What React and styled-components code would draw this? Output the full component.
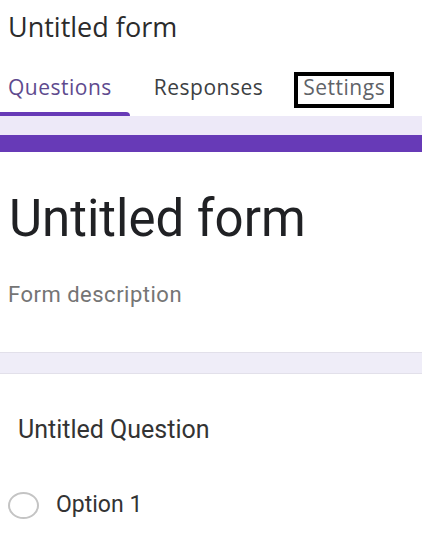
import React from 'react';
import styled, { createGlobalStyle } from 'styled-components';

const GlobalStyle = createGlobalStyle`
  body {
    margin: 0;
    background: #fff;
    font-family: Roboto, "Liberation Sans", sans-serif;
  }
`;

const tabs = [
    { label: 'Questions', active: true },
    { label: 'Responses' },
    { label: 'Settings', boxed: true },
];

const App = () => {
    return (
        <>
            <GlobalStyle />
            <Page>
                <Header>
                    <DocTitle>Untitled form</DocTitle>
                    <TabBar>
                        {tabs.map(t => (
                            <Tab key={t.label} active={t.active}>
                                <TabLabel boxed={t.boxed}>{t.label}</TabLabel>
                            </Tab>
                        ))}
                    </TabBar>
                </Header>
                <Band />
                <AccentBar />
                <TitleCard>
                    <FormTitle>Untitled form</FormTitle>
                    <FormDescription>Form description</FormDescription>
                </TitleCard>
                <Divider />
                <QuestionCard>
                    <QuestionTitle>Untitled Question</QuestionTitle>
                    <OptionRow>
                        <Radio />
                        <OptionLabel>Option 1</OptionLabel>
                    </OptionRow>
                </QuestionCard>
            </Page>
        </>
    )
}

export default App;

const Page = styled.div`
  width: 422px;
  display: flex;
  flex-direction: column;
`;

const Header = styled.header`
  display: flex;
  flex-direction: column;
`;

const DocTitle = styled.h1`
  margin: 0;
  padding: 11px 0 0 8px;
  font-family: "Open Sans", sans-serif;
  font-weight: 400;
  font-size: 27px;
  line-height: 32px;
  color: #2b2b2b;
`;

const TabBar = styled.nav`
  display: flex;
  margin-top: 29px;
`;

const Tab = styled.div`
  position: relative;
  display: flex;
  padding: 0 0 8px 0;
  margin-left: 40px;
  color: #3c4043;

  &:nth-child(2) {
    margin-left: 24px;
  }

  ${props => props.active && `
    margin-left: 0;
    padding: 0 18px 8px 8px;
    color: #5e4a8e;

    &::after {
      content: '';
      position: absolute;
      left: 0;
      right: 0;
      bottom: 0;
      height: 4px;
      background: #673ab7;
      border-radius: 0 4px 0 0;
    }
  `}
`;

const TabLabel = styled.span`
  font-family: "Open Sans", sans-serif;
  font-size: 21px;
  font-weight: 400;
  letter-spacing: 0.5px;
  line-height: 22px;
  padding: 0 5px 6px;
  margin: 0 -9px;
  border: 4px solid ${props => props.boxed ? '#000' : 'transparent'};
  color: inherit;

  ${props => props.boxed && `
    color: #5f6368;
  `}
`;

const Band = styled.div`
  height: 19px;
  background: #ede9f8;
`;

const AccentBar = styled.div`
  height: 17px;
  background: #673ab7;
`;

const TitleCard = styled.section`
  display: flex;
  flex-direction: column;
  padding: 37px 0 44px 9px;
`;

const FormTitle = styled.h2`
  margin: 0;
  font-weight: 400;
  font-size: 51px;
  line-height: 60px;
  color: #202124;
`;

const FormDescription = styled.p`
  margin: 33px 0 0 -1px;
  font-size: 22px;
  line-height: 26px;
  letter-spacing: 0.5px;
  color: #757575;
`;

const Divider = styled.div`
  height: 20px;
  background: #efedf8;
  border-top: 1px solid #e2e0ea;
  border-bottom: 1px solid #e2e0ea;
`;

const QuestionCard = styled.section`
  display: flex;
  flex-direction: column;
  padding: 41px 0 0 18px;
`;

const QuestionTitle = styled.div`
  font-size: 25px;
  line-height: 30px;
  color: #333;
`;

const OptionRow = styled.div`
  display: flex;
  align-items: center;
  gap: 17px;
  margin: 46px 0 0 -10px;
`;

const Radio = styled.span`
  width: 31px;
  height: 27px;
  border: 2px solid #c4c4c4;
  border-radius: 50%;
  box-sizing: border-box;
`;

const OptionLabel = styled.span`
  font-size: 23px;
  line-height: 28px;
  color: #333;
`;
